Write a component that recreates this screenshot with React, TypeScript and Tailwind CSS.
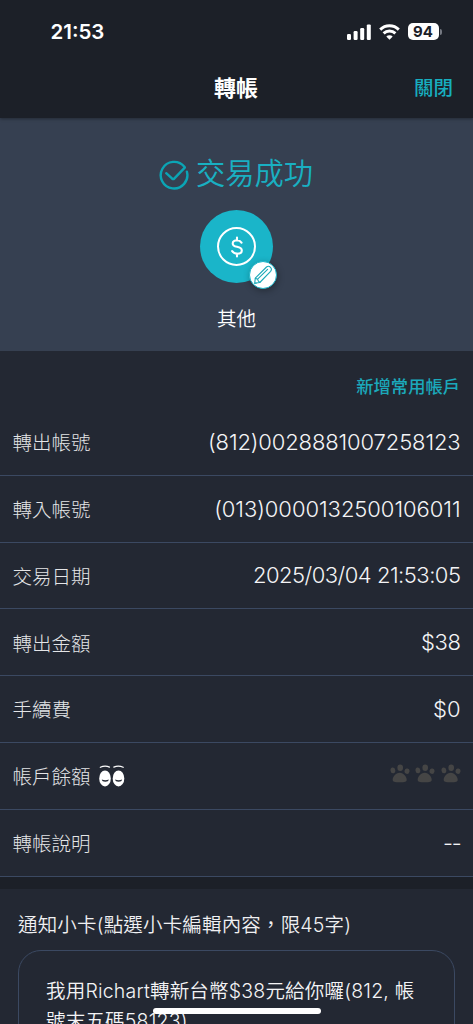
import { ReactNode } from "react";
import clsx from "clsx";

interface RowProps {
  title: string;
  icon?: ReactNode;
  className?: string;
  children: ReactNode;
}

const CellularIcon = () => (
  <svg className="h-4 w-6" viewBox="0 0 24 16" fill="white">
    <rect x="0" y="10" width="4" height="6" rx="1.2" />
    <rect x="6.6" y="7" width="4" height="9" rx="1.2" />
    <rect x="13.2" y="4" width="4" height="12" rx="1.2" />
    <rect x="19.8" y="0.4" width="4" height="15.6" rx="1.2" />
  </svg>
);

const WifiIcon = () => (
  <svg className="h-4 w-[21px]" viewBox="0 0 21 16" fill="none" stroke="white" strokeWidth="2.9">
    <path d="M1.2 5.6a13.2 13.2 0 0 1 18.6 0" />
    <path d="M4.6 9.4a8.4 8.4 0 0 1 11.8 0" />
    <path d="M10.5 15.8 7.3 12.6a4.6 4.6 0 0 1 6.4 0z" fill="white" stroke="none" />
  </svg>
);

const Battery = () => (
  <div className="flex items-center gap-px">
    <div className="flex h-[17px] w-[31px] items-center justify-center rounded-[5px] bg-white text-[15px] leading-none font-bold text-[#1c2028]">
      94
    </div>
    <div className="h-[6px] w-[2px] rounded-r-full bg-[#757982]" />
  </div>
);

const CheckIcon = () => (
  <svg
    className="h-[30px] w-[30px]"
    viewBox="0 0 30 30"
    fill="none"
    stroke="#0ba5b5"
    strokeWidth="2.4"
    strokeLinecap="round"
    strokeLinejoin="round"
  >
    <path d="M27.9 11.7A13.3 13.3 0 1 1 25.4 6.8" />
    <path d="M7.2 13.2 13.2 18.7q1 .8 2 0L25.8 7.6" />
  </svg>
);

const PencilIcon = () => (
  <svg
    className="h-5 w-5"
    viewBox="0 0 20 20"
    fill="none"
    stroke="#1aa9b8"
    strokeWidth="1.1"
    strokeLinecap="round"
    strokeLinejoin="round"
  >
    <path d="M1.7 18.3 2.3 13.2 13.5 2q2.1-1.6 4 .3 1.8 2 .1 4L6.8 17.5z" />
    <path d="M2.3 13.2 4.6 14.2 5.4 16.1 6.8 17.5M4.6 14.2 14.6 4.3M1.7 18.3l1.6-.3" />
  </svg>
);

const EyesIcon = () => (
  <svg className="h-[22px] w-[26px]" viewBox="0 0 26 22" fill="none">
    <g stroke="white" strokeWidth="1.2" strokeLinecap="round">
      <path d="M1.3 2.3Q6 .2 10.5 2.1M14.8 2.1Q19.5.2 24.2 2.3" />
    </g>
    <ellipse cx="6" cy="13.4" rx="5.8" ry="8" fill="white" />
    <ellipse cx="19.5" cy="13.4" rx="5.8" ry="8" fill="white" />
    <path
      d="M2.8 14.6q3.5 1.4 7 0-.3 2.2-3.5 2.2t-3.5-2.2zM16.1 14.6q3.5 1.4 7 0-.3 2.2-3.5 2.2t-3.5-2.2z"
      fill="#232833"
    />
  </svg>
);

const PawIcon = () => (
  <svg className="h-[19px] w-[20px]" viewBox="0 0 20 19" fill="#454545">
    <ellipse cx="2.9" cy="6.4" rx="2.4" ry="2.9" transform="rotate(-8 2.9 6.4)" />
    <ellipse cx="10.2" cy="3.7" rx="2.8" ry="3.2" />
    <ellipse cx="17" cy="7.2" rx="2.5" ry="2.7" transform="rotate(12 17 7.2)" />
    <path d="M9.7 8.7c4 0 7 4 7 7 0 1.9-1.7 2.5-7 2.5s-7-.6-7-2.5c0-3 3-7 7-7z" />
  </svg>
);

const Row = ({ title, icon, className, children }: RowProps) => (
  <div className="flex h-[66.8px] items-center justify-between border-b border-[#3b4962] px-[12.5px] pt-px">
    <div className="flex items-center gap-2 text-[19.5px] font-light text-[#e4e5e7]">
      <span className="pt-[3px]">{title}</span>
      {icon}
    </div>
    <div className={clsx("text-[22px] font-light whitespace-nowrap text-[#f4f4f6]", className)}>
      {children}
    </div>
  </div>
);

export default function App() {
  return (
    <div className="relative flex h-[1024px] w-[473px] flex-col overflow-hidden bg-[#232833] font-[Inter,'Noto_Sans_CJK_TC',sans-serif] text-white">
      <header className="relative z-10 h-[118px] shrink-0 bg-[#1c2028] shadow-[0_1px_3px_rgba(0,0,0,0.35)]">
        <div className="flex h-[63px] items-center justify-between pr-[31.5px] pl-[50.5px]">
          <span className="pt-px text-[20.5px] font-semibold">21:53</span>
          <div className="flex items-center gap-2">
            <CellularIcon />
            <WifiIcon />
            <Battery />
          </div>
        </div>
        <div className="grid h-[50px] grid-cols-3 items-center px-5">
          <h1 className="col-start-2 pr-px text-center text-[22px] font-bold">轉帳</h1>
          <button className="pt-[2px] text-right text-[19.5px] font-medium text-[#17aebf]">
            關閉
          </button>
        </div>
      </header>

      <section className="flex h-[233px] shrink-0 flex-col items-center bg-[#364051] pt-[37px]">
        <div className="flex h-[40px] items-center gap-[7px] pr-px">
          <CheckIcon />
          <h2 className="-mt-[2px] text-[29.3px] leading-none font-[350] text-[#19b0c2]">
            交易成功
          </h2>
        </div>
        <div className="relative mt-[15px] flex h-[73px] w-[73px] items-center justify-center rounded-full bg-[#1ab5c9]">
          <div className="flex h-[39px] w-[39px] items-center justify-center rounded-full border-2 border-white">
            <svg
              className="h-[22px] w-[14px]"
              viewBox="0 0 14 22"
              fill="none"
              stroke="white"
              strokeWidth="2.1"
              strokeLinecap="round"
            >
              <path d="M7 1.5v3M7 17.5v3M11.5 6.6C10.3 4.8 8.8 4.3 7 4.3c-2.5 0-4.3 1.1-4.3 3.1 0 2.3 2 2.9 4.3 3.4 2.5.6 4.8 1.2 4.8 3.6 0 2.2-2 3.3-4.6 3.3-2.2 0-4.1-.8-5.1-2.6" />
            </svg>
          </div>
          <div className="absolute top-[51px] left-[49px] flex h-7 w-7 items-center justify-center rounded-full border border-[#1ab5c9] bg-white shadow-[1px_2px_7px_rgba(0,0,0,0.3)]">
            <PencilIcon />
          </div>
        </div>
        <p className="mt-[22px] text-[19.5px] font-[350]">其他</p>
      </section>

      <section className="shrink-0">
        <div className="flex h-[58px] items-center justify-end px-[13px] pt-[14px]">
          <button className="text-[17.3px] font-medium text-[#1ba9bb]">新增常用帳戶</button>
        </div>
        <Row title="轉出帳號" className="tracking-[-0.13px]">
          (812)0028881007258123
        </Row>
        <Row title="轉入帳號" className="tracking-[-0.05px]">
          (013)0000132500106011
        </Row>
        <Row title="交易日期" className="tracking-[-0.5px]">
          2025/03/04 21:53:05
        </Row>
        <Row title="轉出金額" className="tracking-[-0.4px]">
          $38
        </Row>
        <Row title="手續費">$0</Row>
        <Row title="帳戶餘額" icon={<EyesIcon />}>
          <div className="flex gap-[5.5px] pb-[5px]">
            <PawIcon />
            <PawIcon />
            <PawIcon />
          </div>
        </Row>
        <Row title="轉帳說明" className="tracking-[-1.2px]">
          --
        </Row>
      </section>

      <div className="h-[12px] shrink-0 bg-[#1c2028]" />

      <section className="shrink-0 px-[18px] pt-[21px]">
        <p className="text-[19.5px] leading-[30px] font-[350] tracking-[0.17px] whitespace-nowrap text-[#f0f0f2]">
          通知小卡(點選小卡編輯內容，限45字)
        </p>
        <div className="mt-[10px] h-[120px] rounded-[23px] border border-[#3b4962] px-[27px] pt-[25px] text-[19.5px] leading-[30px] font-[350] tracking-[0.2px] whitespace-nowrap text-[#f4f4f6]">
          <p>我用Richart轉新台幣$38元給你囉(812, 帳</p>
          <p>號末五碼58123)</p>
        </div>
      </section>

      <div className="absolute top-[1008px] left-[153px] h-[6px] w-[168px] rounded-full bg-white" />
    </div>
  );
}
